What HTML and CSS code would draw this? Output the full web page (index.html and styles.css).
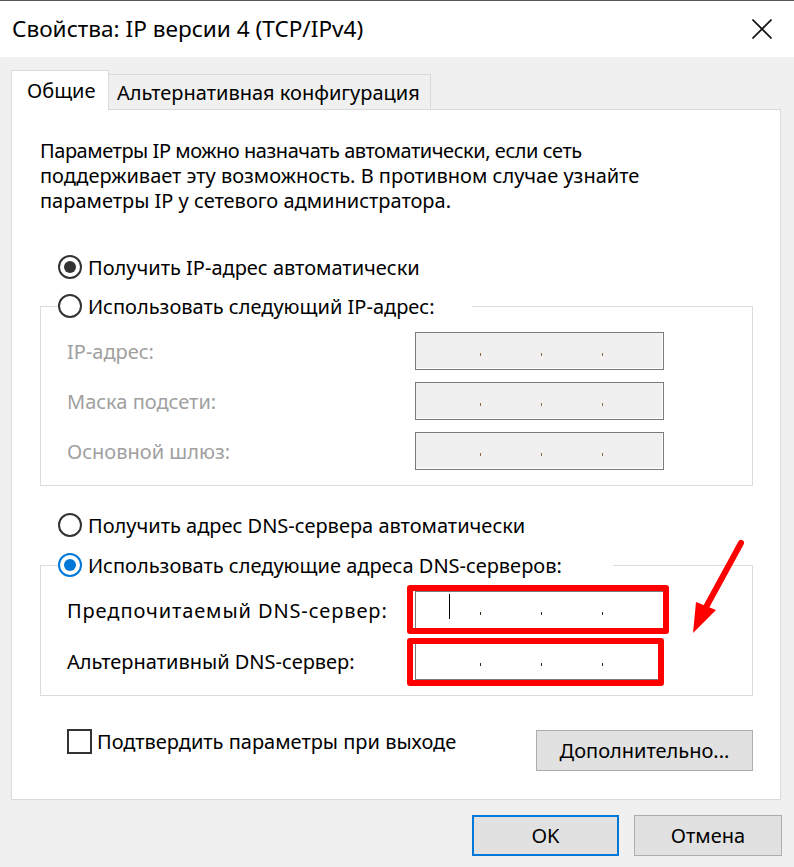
FILE: index.html
```html
<!DOCTYPE html>
<html lang="ru">
<head>
<meta charset="utf-8">
<title>Свойства: IP версии 4 (TCP/IPv4)</title>
<link rel="stylesheet" href="styles.css">
</head>
<body>
<div class="window">
  <header class="titlebar">
    <span class="title">Свойства: IP версии 4 (TCP/IPv4)</span>
    <span class="close">
      <svg width="20" height="20" viewBox="0 0 20 20"><path d="M0.5 0.5 L19.5 19.5 M19.5 0.5 L0.5 19.5" stroke="#111" stroke-width="1.6" fill="none"/></svg>
    </span>
  </header>
  <main class="content">
    <div class="tabs">
      <div class="tab tab-active">Общие</div>
      <div class="tab tab-inactive">Альтернативная конфигурация</div>
    </div>
    <section class="panel">
      <p class="intro"><span class="tight">Параметры IP можно назначать автоматически, если сеть</span><br>поддерживает эту возможность. В противном случае узнайте<br>параметры IP у сетевого администратора.</p>

      <div class="radio-row row-first"><span class="radio radio-gray"></span><span>Получить IP-адрес автоматически</span></div>

      <fieldset class="group group-ip">
        <legend class="legend legend-ip"><span class="radio"></span><span>Использовать следующий IP-адрес:</span></legend>
        <div class="field disabled">
          <span class="label">IP-адрес:</span>
          <div class="ip ip-disabled"><span class="seg seg-1"></span><span class="dot"></span><span class="seg"></span><span class="dot"></span><span class="seg"></span><span class="dot"></span><span class="seg"></span></div>
        </div>
        <div class="field disabled">
          <span class="label">Маска подсети:</span>
          <div class="ip ip-disabled"><span class="seg seg-1"></span><span class="dot"></span><span class="seg"></span><span class="dot"></span><span class="seg"></span><span class="dot"></span><span class="seg"></span></div>
        </div>
        <div class="field disabled">
          <span class="label">Основной шлюз:</span>
          <div class="ip ip-disabled"><span class="seg seg-1"></span><span class="dot"></span><span class="seg"></span><span class="dot"></span><span class="seg"></span><span class="dot"></span><span class="seg"></span></div>
        </div>
      </fieldset>

      <div class="radio-row row-dns-auto"><span class="radio"></span><span>Получить адрес DNS-сервера автоматически</span></div>

      <fieldset class="group group-dns">
        <legend class="legend legend-dns"><span class="radio radio-blue"></span><span>Использовать следующие адреса DNS-серверов:</span></legend>
        <div class="field">
          <span class="label label-wide">Предпочитаемый DNS-сервер:</span>
          <div class="ip ip-enabled"><span class="seg seg-1"><span class="caret"></span></span><span class="dot"></span><span class="seg"></span><span class="dot"></span><span class="seg"></span><span class="dot"></span><span class="seg"></span><span class="mark mark-1"></span></div>
        </div>
        <div class="field">
          <span class="label">Альтернативный DNS-сервер:</span>
          <div class="ip ip-enabled"><span class="seg seg-1"></span><span class="dot"></span><span class="seg"></span><span class="dot"></span><span class="seg"></span><span class="dot"></span><span class="seg"></span><span class="mark mark-2"></span></div>
        </div>
      </fieldset>

      <div class="bottom-row">
        <label class="check"><span class="checkbox"></span><span>Подтвердить параметры при выходе</span></label>
        <span class="btn btn-advanced">Дополнительно...</span>
      </div>

      <svg class="arrow" width="70" height="105" viewBox="0 0 70 105">
        <path d="M61 8 L25 74" stroke="#f00" stroke-width="6" stroke-linecap="round" fill="none"/>
        <polygon points="16,67 36,75 13,98" fill="#f00"/>
      </svg>
    </section>
    <footer class="actions">
      <span class="btn btn-ok">OK</span>
      <span class="btn btn-cancel">Отмена</span>
    </footer>
  </main>
</div>
</body>
</html>
```

FILE: styles.css
```css
* { box-sizing: border-box; }

html, body {
  margin: 0;
  padding: 0;
}

body {
  width: 794px;
  height: 867px;
  overflow: hidden;
  background: #f0f0f0;
  font-family: "Noto Sans", "Segoe UI", sans-serif;
  font-size: 20px;
  color: #000;
}

.titlebar {
  height: 57px;
  border-top: 1px solid #555;
  background: #fff;
  display: flex;
  align-items: center;
  justify-content: space-between;
  padding: 0 22px 0 12px;
}

.title {
  font-size: 22.6px;
  line-height: 28px;
  color: #000;
}

.close {
  display: flex;
  width: 20px;
  height: 20px;
}

.content {
  padding: 13px 13px 0 11px;
}

.tabs {
  display: flex;
  align-items: flex-end;
  height: 39px;
  position: relative;
  z-index: 1;
}

.tab {
  display: flex;
  align-items: center;
  border: 1px solid #d9d9d9;
  white-space: nowrap;
}

.tab-active {
  width: 98px;
  height: 40px;
  margin-bottom: -1px;
  border-bottom: none;
  background: #fff;
  padding-left: 15px;
}

.tab-inactive {
  width: 322px;
  height: 35px;
  border-left: none;
  border-bottom: none;
  background: #f0f0f0;
  padding-left: 8px;
}

.panel {
  position: relative;
  width: 770px;
  height: 691px;
  border: 1px solid #d9d9d9;
  background: #fff;
  padding: 28px 27px 0 28px;
}

.intro {
  margin: 0;
  line-height: 25px;
  white-space: nowrap;
}

.tight { letter-spacing: -0.45px; }

.radio-row {
  display: flex;
  align-items: center;
  height: 30px;
  padding-left: 18px;
  gap: 6px;
  white-space: nowrap;
}

.row-first { margin-top: 39px; }
.row-dns-auto { margin-top: 24px; }

.radio {
  flex: none;
  width: 24px;
  height: 24px;
  border: 2px solid #333;
  border-radius: 50%;
  background: #fff;
  display: flex;
  align-items: center;
  justify-content: center;
}

.radio-gray::after,
.radio-blue::after {
  content: "";
  width: 12px;
  height: 12px;
  border-radius: 50%;
  background: #333;
}

.radio-blue { border-color: #0078d7; }
.radio-blue::after { background: #0078d7; }

.group {
  margin: 0;
  padding: 11px 0 15px 0;
  border: 1px solid #dcdcdc;
  min-width: 0;
}

.group-ip { margin-top: 9px; }
.group-dns { margin-top: 10px; }

.legend {
  display: flex;
  align-items: center;
  gap: 6px;
  height: 30px;
  margin-left: 17px;
  padding: 0;
  white-space: nowrap;
}

.legend-ip { width: 414px; }
.legend-dns { width: 555px; }

.field {
  display: grid;
  grid-template-columns: 348px 249px;
  align-items: center;
  padding-left: 26px;
  height: 38px;
}

.label { white-space: nowrap; }
.label-wide { letter-spacing: 0.9px; }

.group-ip .field + .field { margin-top: 12px; }
.group-dns .field + .field { margin-top: 13px; }

.disabled .label { color: #a0a0a0; }

.ip {
  position: relative;
  display: flex;
  align-items: center;
  height: 38px;
  border: 1px solid #7a7a7a;
}

.ip-disabled {
  background: #f0f0f0;
  box-shadow: inset -1px -1px 0 #fff;
}

.ip-enabled { background: #fff; }

.seg {
  width: 61px;
  height: 100%;
  display: flex;
  align-items: center;
}

.seg-1 { width: 65px; }

.dot {
  width: 1px;
  height: 3px;
  margin-top: 6px;
  background: #8a6a3c;
}

.ip-enabled .dot { background: #3b2a12; }

.caret {
  width: 1px;
  height: 25px;
  margin-left: 33px;
  margin-top: -7px;
  background: #000;
}

.mark {
  position: absolute;
  border: 6px solid #ff0000;
  border-radius: 3px;
}

.mark-1 { left: -9px; right: -6px; top: -7px; bottom: -6px; }
.mark-2 { left: -9px; right: -1px; top: -5px; bottom: -7px; }

.bottom-row {
  display: flex;
  justify-content: space-between;
  align-items: flex-start;
  margin-top: 34px;
}

.check {
  display: flex;
  align-items: center;
  gap: 5px;
  margin-left: 27px;
  margin-top: -2px;
  white-space: nowrap;
}

.checkbox {
  flex: none;
  width: 25px;
  height: 25px;
  border: 2px solid #333;
  background: #fff;
}

.btn {
  display: flex;
  align-items: center;
  justify-content: center;
  height: 41px;
  background: #e1e1e1;
  border: 1px solid #adadad;
  white-space: nowrap;
}

.btn-advanced { width: 217px; }

.arrow {
  position: absolute;
  left: 668px;
  top: 425px;
}

.actions {
  display: flex;
  justify-content: flex-end;
  gap: 15px;
  margin-top: 15px;
  margin-right: -1px;
}

.btn-ok {
  width: 147px;
  border: 2px solid #0078d7;
}

.btn-cancel { width: 148px; }
```
